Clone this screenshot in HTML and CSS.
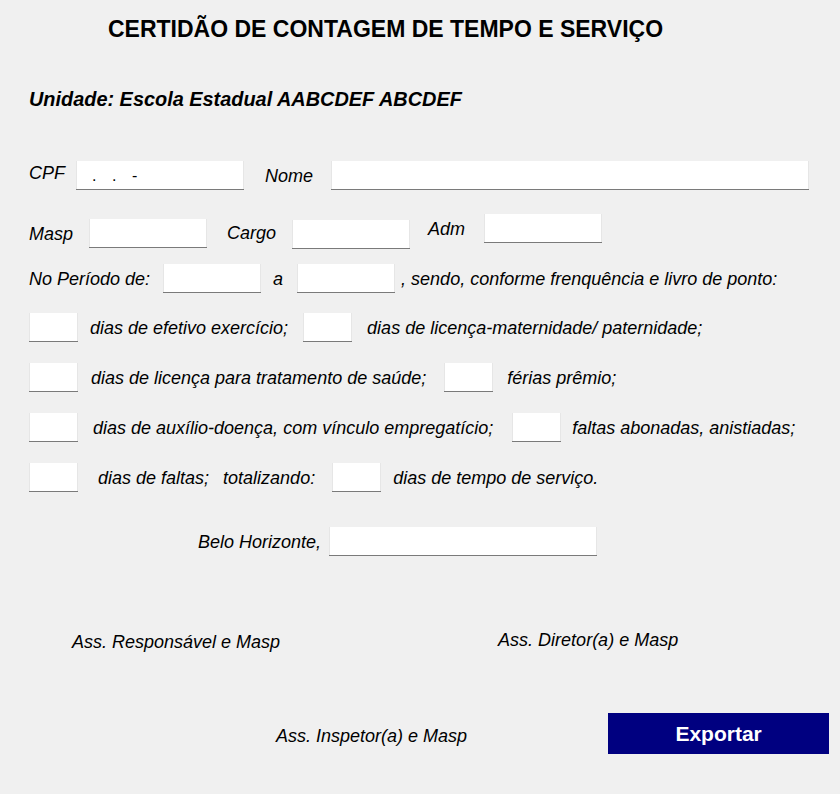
FILE: index.html
```html
<!DOCTYPE html>
<html lang="pt-BR">
<head>
<meta charset="utf-8">
<title>Certidão de Contagem de Tempo e Serviço</title>
<link rel="stylesheet" href="styles.css">
</head>
<body>
<main class="form">
  <h1 class="title">CERTIDÃO DE CONTAGEM DE TEMPO E SERVIÇO</h1>
  <h2 class="unidade">Unidade: Escola Estadual AABCDEF ABCDEF</h2>

  <div class="row row-1">
    <span class="lbl up-3">CPF</span>
    <div class="field w-cpf ml-11 cpf-mask"><span>.</span><span>.</span><span>-</span></div>
    <span class="lbl ml-21">Nome</span>
    <input class="field w-nome ml-18" type="text">
  </div>

  <div class="row row-2">
    <span class="lbl mt-5">Masp</span>
    <input class="field w-118 ml-16 mt-5" type="text">
    <span class="lbl ml-20 mt-4">Cargo</span>
    <input class="field w-118 ml-16 mt-6" type="text">
    <span class="lbl ml-18 mt-0">Adm</span>
    <input class="field w-118 ml-19" type="text">
  </div>

  <div class="row row-3">
    <span class="lbl">No Período de:</span>
    <input class="field w-98 ml-13" type="text">
    <span class="lbl ml-12">a</span>
    <input class="field w-98 ml-14" type="text">
    <span class="lbl ml-6">, sendo, conforme frenquência e livro de ponto:</span>
  </div>

  <div class="row row-days first">
    <input class="field w-box" type="text">
    <span class="lbl ml-12">dias de efetivo exercício;</span>
    <input class="field w-box ml-15" type="text">
    <span class="lbl ml-15">dias de licença-maternidade/ paternidade;</span>
  </div>

  <div class="row row-days">
    <input class="field w-box" type="text">
    <span class="lbl ml-13">dias de licença para tratamento de saúde;</span>
    <input class="field w-box ml-18" type="text">
    <span class="lbl ml-14">férias prêmio;</span>
  </div>

  <div class="row row-days">
    <input class="field w-box" type="text">
    <span class="lbl ml-15">dias de auxílio-doença, com vínculo empregatício;</span>
    <input class="field w-box ml-19" type="text">
    <span class="lbl ml-11">faltas abonadas, anistiadas;</span>
  </div>

  <div class="row row-days">
    <input class="field w-box" type="text">
    <span class="lbl ml-20">dias de faltas;</span>
    <span class="lbl ml-14">totalizando:</span>
    <input class="field w-box ml-17" type="text">
    <span class="lbl ml-12">dias de tempo de serviço.</span>
  </div>

  <div class="row row-city">
    <span class="lbl">Belo Horizonte,</span>
    <input class="field w-city ml-8" type="text">
  </div>

  <div class="row row-sign">
    <span class="lbl">Ass. Responsável e Masp</span>
    <span class="lbl sign-right up-2">Ass. Diretor(a) e Masp</span>
  </div>

  <div class="row row-bottom">
    <span class="lbl mt-8">Ass. Inspetor(a) e Masp</span>
    <button class="btn-export" type="button">Exportar</button>
  </div>
</main>
</body>
</html>
```

FILE: styles.css
```css
* { box-sizing: border-box; }

html, body {
  margin: 0;
  padding: 0;
  background: #f0f0f0;
}

body {
  width: 840px;
  height: 794px;
  overflow: hidden;
  font-family: "Liberation Sans", Arial, sans-serif;
  font-style: italic;
  font-size: 18px;
  color: #000;
}

.form {
  padding-left: 29px;
}

.title {
  margin: 0;
  padding-top: 16px;
  padding-left: 79px;
  font-size: 23px;
  line-height: 26px;
  font-weight: bold;
  font-style: normal;
}

.unidade {
  margin: 45px 0 0;
  font-size: 19.9px;
  line-height: 24px;
  font-weight: bold;
  font-style: italic;
}

.row {
  display: flex;
  align-items: flex-start;
}

.row-1 { margin-top: 50px; }
.row-2 { margin-top: 24px; }
.row-3 { margin-top: 15px; }
.row-days { margin-top: 21px; }
.row-days.first { margin-top: 20px; }
.row-city { margin-top: 35px; padding-left: 169px; }
.row-sign { margin-top: 71px; padding-left: 43px; }
.row-bottom { margin-top: 57px; padding-left: 247px; }

.lbl {
  display: block;
  height: 29px;
  line-height: 31px;
  white-space: nowrap;
}

.field {
  display: block;
  height: 29px;
  margin-top: 0;
  padding: 0 4px;
  border: none;
  border-bottom: 1px solid #7a7a7a;
  background: #fff;
  box-shadow: inset 1px 0 0 #e6e6e6, inset -1px 0 0 #e6e6e6;
  font-family: "Liberation Sans", Arial, sans-serif;
  font-size: 16px;
  font-style: normal;
  outline: none;
}

.cpf-mask {
  display: flex;
  align-items: center;
  gap: 15.5px;
  padding-left: 16px;
  line-height: 29px;
}

.w-cpf { width: 168px; }
.w-nome { width: 478px; }
.w-118 { width: 118px; }
.w-98 { width: 98px; }
.w-box { width: 49px; }
.w-city { width: 268px; }

.ml-6 { margin-left: 6px; }
.ml-8 { margin-left: 8px; }
.ml-11 { margin-left: 11px; }
.ml-12 { margin-left: 12px; }
.ml-13 { margin-left: 13px; }
.ml-14 { margin-left: 14px; }
.ml-15 { margin-left: 15px; }
.ml-16 { margin-left: 16px; }
.ml-17 { margin-left: 17px; }
.ml-18 { margin-left: 18px; }
.ml-19 { margin-left: 19px; }
.ml-20 { margin-left: 20px; }
.ml-21 { margin-left: 21px; }

.mt-0 { margin-top: 0; }
.mt-4 { margin-top: 4px; }
.mt-5 { margin-top: 5px; }
.mt-6 { margin-top: 6px; }
.mt-8 { margin-top: 8px; }

.up-2 { margin-top: -2px; }
.up-3 { margin-top: -3px; }

.sign-right { margin-left: 218px; }

.btn-export {
  width: 221px;
  height: 41px;
  margin-left: 141px;
  padding: 0;
  border: none;
  background: #000080;
  color: #fff;
  font-family: "Liberation Sans", Arial, sans-serif;
  font-size: 21px;
  font-weight: bold;
  font-style: normal;
  cursor: pointer;
}
```
